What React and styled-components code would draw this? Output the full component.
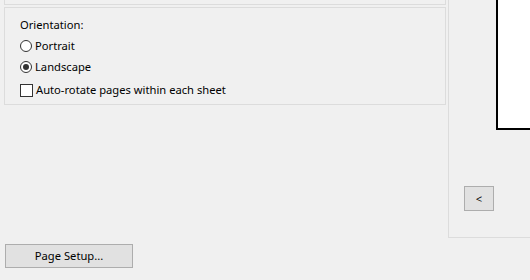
import React from "react";
import styled, { createGlobalStyle } from "styled-components";

const Global = createGlobalStyle`
  html, body { margin: 0; padding: 0; background: #f0f0f0; }
  body { font-family: "Noto Sans", "Segoe UI", sans-serif; font-size: 11.2px; color: #000; }
`;

const Window = styled.div`
  width: 530px;
  height: 280px;
  display: flex;
  flex-direction: row;
  overflow: hidden;
  background: #f0f0f0;
`;

const LeftColumn = styled.div`
  width: 448px;
  flex: none;
  display: flex;
  flex-direction: column;
`;

const PanelStub = styled.div`
  box-sizing: border-box;
  margin-left: 4px;
  width: 442px;
  height: 5px;
  border: 1px solid #dcdcdc;
  border-top: none;
`;

const GroupBox = styled.div`
  box-sizing: border-box;
  margin-left: 4px;
  margin-top: 2px;
  width: 442px;
  height: 98px;
  border: 1px solid #dcdcdc;
  display: flex;
  flex-direction: column;
  padding-left: 15px;
`;

const Label = styled.div`
  margin-top: 9px;
  height: 16px;
  line-height: 16px;
`;

const OptionRow = styled.label`
  display: flex;
  align-items: center;
  gap: ${(p) => p.$gap}px;
  height: 20px;
  margin-top: ${(p) => p.$top}px;
  line-height: 16px;
`;

const Radio = styled.span`
  width: 10px;
  height: 10px;
  border: 1px solid #333;
  border-radius: 50%;
  background: #fff;
  display: flex;
  align-items: center;
  justify-content: center;
  flex: none;
  &::after {
    content: "";
    display: ${(p) => (p.$checked ? "block" : "none")};
    width: 6px;
    height: 6px;
    border-radius: 50%;
    background: #333;
  }
`;

const Check = styled.span`
  width: 11px;
  height: 11px;
  border: 1px solid #333;
  background: #fff;
  flex: none;
`;

const Button = styled.div`
  box-sizing: border-box;
  width: ${(p) => p.$w}px;
  height: ${(p) => p.$h}px;
  background: #e1e1e1;
  border: 1px solid #adadad;
  display: flex;
  align-items: center;
  justify-content: center;
  line-height: 16px;
`;

const BottomBar = styled.div`
  margin-top: 139px;
  margin-left: 5px;
`;

const RightColumn = styled.div`
  width: 81px;
  height: 237px;
  flex: none;
  border-left: 1px solid #dcdcdc;
  border-bottom: 1px solid #dcdcdc;
  display: flex;
  flex-direction: column;
  overflow: hidden;
`;

const Sheet = styled.div`
  margin-left: 47px;
  height: 128px;
  width: 60px;
  flex: none;
  background: #fff;
  border-left: 2px solid #000;
  border-bottom: 2px solid #000;
`;

const NavArea = styled.div`
  margin-top: 56px;
  margin-left: 15px;
`;

export default function App() {
  return (
    <>
      <Global />
      <Window>
        <LeftColumn>
          <PanelStub />
          <GroupBox>
            <Label>Orientation:</Label>
            <OptionRow $top={3} $gap={3}>
              <Radio />
              <span>Portrait</span>
            </OptionRow>
            <OptionRow $top={1} $gap={3}>
              <Radio $checked />
              <span>Landscape</span>
            </OptionRow>
            <OptionRow $top={3} $gap={3}>
              <Check />
              <span>Auto-rotate pages within each sheet</span>
            </OptionRow>
          </GroupBox>
          <BottomBar>
            <Button $w={128} $h={24}>Page Setup...</Button>
          </BottomBar>
        </LeftColumn>
        <RightColumn>
          <Sheet />
          <NavArea>
            <Button $w={30} $h={25}>&lt;</Button>
          </NavArea>
        </RightColumn>
      </Window>
    </>
  );
}
